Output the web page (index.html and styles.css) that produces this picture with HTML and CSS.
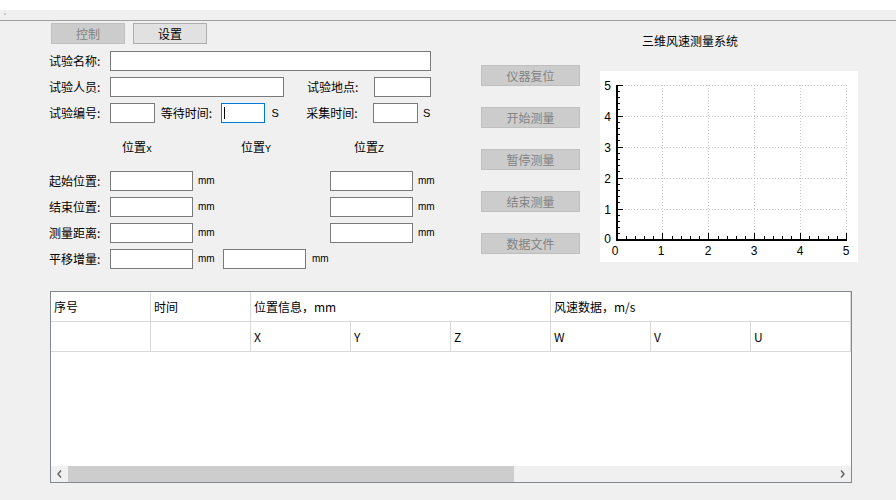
FILE: index.html
```html
<!DOCTYPE html>
<html lang="zh">
<head>
<meta charset="utf-8">
<link rel="stylesheet" href="styles.css">
</head>
<body>
<div class="titlebar"></div>
<div class="menubar"><span class="grip"></span></div>
<div class="upper">
  <div class="form">
    <div class="tabs"><div class="tab tab-off">控制</div><div class="tab tab-on">设置</div></div>
    <div class="row r1"><span class="lbl">试验名称:</span><span class="box w321"></span></div>
    <div class="row"><span class="lbl">试验人员:</span><span class="box w174"></span><span class="lbl lbl2">试验地点:</span><span class="box w57"></span></div>
    <div class="row"><span class="lbl">试验编号:</span><span class="box w45"></span><span class="lbl lbl3">等待时间:</span><span class="box w45 focus"><i class="caret"></i></span><span class="unit-s">S</span><span class="lbl lbl4">采集时间:</span><span class="box w45"></span><span class="unit-s us2">S</span></div>
    <div class="poshead">
      <span class="ph phx">位置<small>x</small></span>
      <span class="ph phy">位置<small>Y</small></span>
      <span class="ph phz">位置<small>Z</small></span>
    </div>
    <div class="posgrid">
      <span class="lbl">起始位置:</span><span class="box"></span><span class="mm">mm</span><span class="box c6"></span><span class="mm">mm</span>
      <span class="lbl">结束位置:</span><span class="box"></span><span class="mm">mm</span><span class="box c6"></span><span class="mm">mm</span>
      <span class="lbl">测量距离:</span><span class="box"></span><span class="mm">mm</span><span class="box c6"></span><span class="mm">mm</span>
      <span class="lbl">平移增量:</span><span class="box"></span><span class="mm">mm</span><span class="box"></span><span class="mm mm2">mm</span>
    </div>
  </div>
  <div class="buttons">
    <div class="btn">仪器复位</div>
    <div class="btn">开始测量</div>
    <div class="btn">暂停测量</div>
    <div class="btn">结束测量</div>
    <div class="btn">数据文件</div>
  </div>
  <div class="chartcol">
    <div class="title">三维风速测量系统</div>
    <div class="chart">
      <svg width="258" height="191" viewBox="0 0 258 191">
        <g stroke="#c4c4c4" stroke-width="1" stroke-dasharray="1 2" fill="none">
          <path d="M19 14.5H247M19 45.5H247M19 76.5H247M19 107.5H247M19 138.5H247"/>
          <path d="M62.5 14V168M108.5 14V168M154.5 14V168M200.5 14V168M246.5 14V168"/>
        </g>
        <rect x="16" y="14" width="2" height="156" fill="#000"/>
        <rect x="16" y="168" width="231" height="2" fill="#000"/>
        <g stroke="#000" stroke-width="1" fill="none">
          <path d="M18 14.5h5M18 45.5h5M18 76.5h5M18 107.5h5M18 138.5h5"/>
          <path d="M18 162.5h2M18 156.5h2M18 150.5h2M18 144.5h2M18 131.5h2M18 125.5h2M18 119.5h2M18 113.5h2M18 100.5h2M18 94.5h2M18 88.5h2M18 82.5h2M18 69.5h2M18 63.5h2M18 57.5h2M18 51.5h2M18 38.5h2M18 32.5h2M18 26.5h2M18 20.5h2"/>
          <path d="M62.5 168v-6M108.5 168v-6M154.5 168v-6M200.5 168v-6M246.5 170v-8"/>
          <path d="M26.5 168v-3M35.5 168v-3M44.5 168v-3M53.5 168v-3M72.5 168v-3M81.5 168v-3M90.5 168v-3M99.5 168v-3M118.5 168v-3M127.5 168v-3M136.5 168v-3M145.5 168v-3M164.5 168v-3M173.5 168v-3M182.5 168v-3M191.5 168v-3M209.5 168v-3M218.5 168v-3M228.5 168v-3M237.5 168v-3"/>
        </g>
        <g class="ticklbl" text-anchor="end">
          <text x="11" y="18.5">5</text>
          <text x="11" y="49.5">4</text>
          <text x="11" y="80.5">3</text>
          <text x="11" y="111.5">2</text>
          <text x="11" y="142.5">1</text>
          <text x="11" y="172">0</text>
        </g>
        <g class="ticklbl" text-anchor="middle">
          <text x="15" y="184">0</text>
          <text x="61" y="184">1</text>
          <text x="108" y="184">2</text>
          <text x="154" y="184">3</text>
          <text x="200" y="184">4</text>
          <text x="246" y="184">5</text>
        </g>
      </svg>
    </div>
  </div>
</div>
<div class="table">
  <div class="hrow">
    <div class="th">序号</div><div class="th">时间</div><div class="th span3">位置信息，mm</div><div class="th span3">风速数据，m/s</div>
  </div>
  <div class="hrow">
    <div class="th"></div><div class="th"></div><div class="th">X</div><div class="th">Y</div><div class="th">Z</div><div class="th">W</div><div class="th">V</div><div class="th">U</div>
  </div>
  <div class="tbody"></div>
  <div class="hscroll">
    <span class="arrow"><svg width="5" height="8" viewBox="0 0 5 8"><path d="M4 0.5L1 4L4 7.5" stroke="#606060" stroke-width="1.4" fill="none"/></svg></span>
    <div class="thumb"></div>
    <div class="track"></div>
    <span class="arrow"><svg width="5" height="8" viewBox="0 0 5 8"><path d="M1 0.5L4 4L1 7.5" stroke="#606060" stroke-width="1.4" fill="none"/></svg></span>
  </div>
</div>
</body>
</html>
```

FILE: styles.css
```css
html, body {
  margin: 0;
  padding: 0;
}
body {
  background: #f0f0f0;
  font-family: "Noto Sans CJK SC", sans-serif;
  font-size: 12px;
  color: #000;
  width: 896px;
  height: 500px;
  overflow: hidden;
}
.titlebar {
  height: 10px;
  background: #fff;
}
.menubar {
  height: 7px;
  padding-top: 3px;
  border-bottom: 1px solid #a0a0a0;
}
.grip {
  display: block;
  width: 2px;
  height: 2px;
  margin-left: 4px;
  background: #c8c8c8;
}
.upper {
  display: flex;
  align-items: flex-start;
  padding-left: 49px;
}
.form {
  width: 382px;
}
.tabs {
  display: flex;
  gap: 8px;
  margin: 2px 0 0 2px;
}
.tab {
  width: 74px;
  height: 21px;
  box-sizing: border-box;
  display: flex;
  align-items: center;
  justify-content: center;
  line-height: 1;
}
.tab-off {
  background: #cccccc;
  border: 1px solid #bfbfbf;
  color: #838383;
}
.tab-on {
  background: #e1e1e1;
  border: 1px solid #adadad;
}
.row {
  display: flex;
  align-items: center;
  height: 20px;
  margin-top: 6px;
}
.r1 {
  margin-top: 7px;
}
.lbl {
  width: 61px;
  line-height: 20px;
  white-space: nowrap;
}
.box {
  display: block;
  height: 20px;
  box-sizing: border-box;
  background: #fff;
  border: 1px solid #7a7a7a;
}
.w321 { width: 321px; }
.w174 { width: 174px; }
.w57 { width: 57px; }
.w45 { width: 45px; }
.lbl2 { margin-left: 23px; width: 67px; }
.lbl3 { margin-left: 6px; width: 60px; }
.lbl4 { margin-left: 27px; width: 67px; }
.focus {
  border-color: #0078d7;
}
.caret {
  display: block;
  width: 1px;
  height: 12px;
  margin: 3px 0 0 2px;
  background: #000;
}
.unit-s {
  width: 8px;
  margin-left: 6px;
  font-family: "Liberation Sans", sans-serif;
  font-size: 11px;
  line-height: 20px;
}
.us2 { margin-left: 5px; }
.poshead {
  display: grid;
  grid-template-columns: 61px 83px 30px 83px 24px 83px 30px;
  height: 20px;
  line-height: 20px;
  margin-top: 14px;
}
.ph {
  white-space: nowrap;
}
.ph small {
  font-family: "Liberation Mono", monospace;
  font-size: 10px;
}
.phx { grid-column: 2; padding-left: 12px; }
.phy { grid-column: 4; padding-left: 18px; }
.phz { grid-column: 6; padding-left: 24px; }
.posgrid {
  display: grid;
  grid-template-columns: 61px 83px 30px 83px 24px 83px 30px;
  grid-auto-rows: 20px;
  row-gap: 6px;
  margin-top: 14px;
}
.posgrid .lbl {
  grid-column: 1;
}
.c6 {
  grid-column: 6;
}
.mm {
  padding-left: 5px;
  font-family: "Liberation Sans", sans-serif;
  font-size: 10px;
  line-height: 20px;
}
.mm2 {
  padding-left: 6px;
}
.buttons {
  width: 99px;
  margin-left: 50px;
  padding-top: 44px;
  display: flex;
  flex-direction: column;
  gap: 21px;
}
.btn {
  height: 21px;
  box-sizing: border-box;
  background: #cccccc;
  border: 1px solid #bfbfbf;
  color: #838383;
  display: flex;
  align-items: center;
  justify-content: center;
  line-height: 1;
}
.chartcol {
  margin-left: 20px;
}
.title {
  height: 20px;
  line-height: 20px;
  margin-top: 10px;
  padding-left: 42px;
}
.chart {
  margin-top: 20px;
  width: 258px;
  height: 191px;
  background: #fff;
}
.chart svg {
  display: block;
}
.ticklbl {
  font-family: "Liberation Sans", sans-serif;
  font-size: 12px;
  fill: #000;
}
.table {
  margin: 22px 0 0 50px;
  width: 800px;
  height: 190px;
  border: 1px solid #828790;
  background: #fff;
  display: flex;
  flex-direction: column;
}
.hrow {
  display: grid;
  grid-template-columns: repeat(8, 100px);
  height: 30px;
}
.th {
  box-sizing: border-box;
  border-right: 1px solid #d9d9d9;
  border-bottom: 1px solid #d9d9d9;
  padding-left: 3px;
  display: flex;
  align-items: center;
  white-space: nowrap;
}
.span3 {
  grid-column: span 3;
}
.tbody {
  flex: 1;
}
.hscroll {
  height: 16px;
  background: #f0f0f0;
  display: flex;
  align-items: stretch;
}
.arrow {
  width: 17px;
  display: flex;
  align-items: center;
  justify-content: center;
}
.arrow svg {
  display: block;
}
.thumb {
  width: 446px;
  background: #cdcdcd;
}
.track {
  flex: 1;
}
```
